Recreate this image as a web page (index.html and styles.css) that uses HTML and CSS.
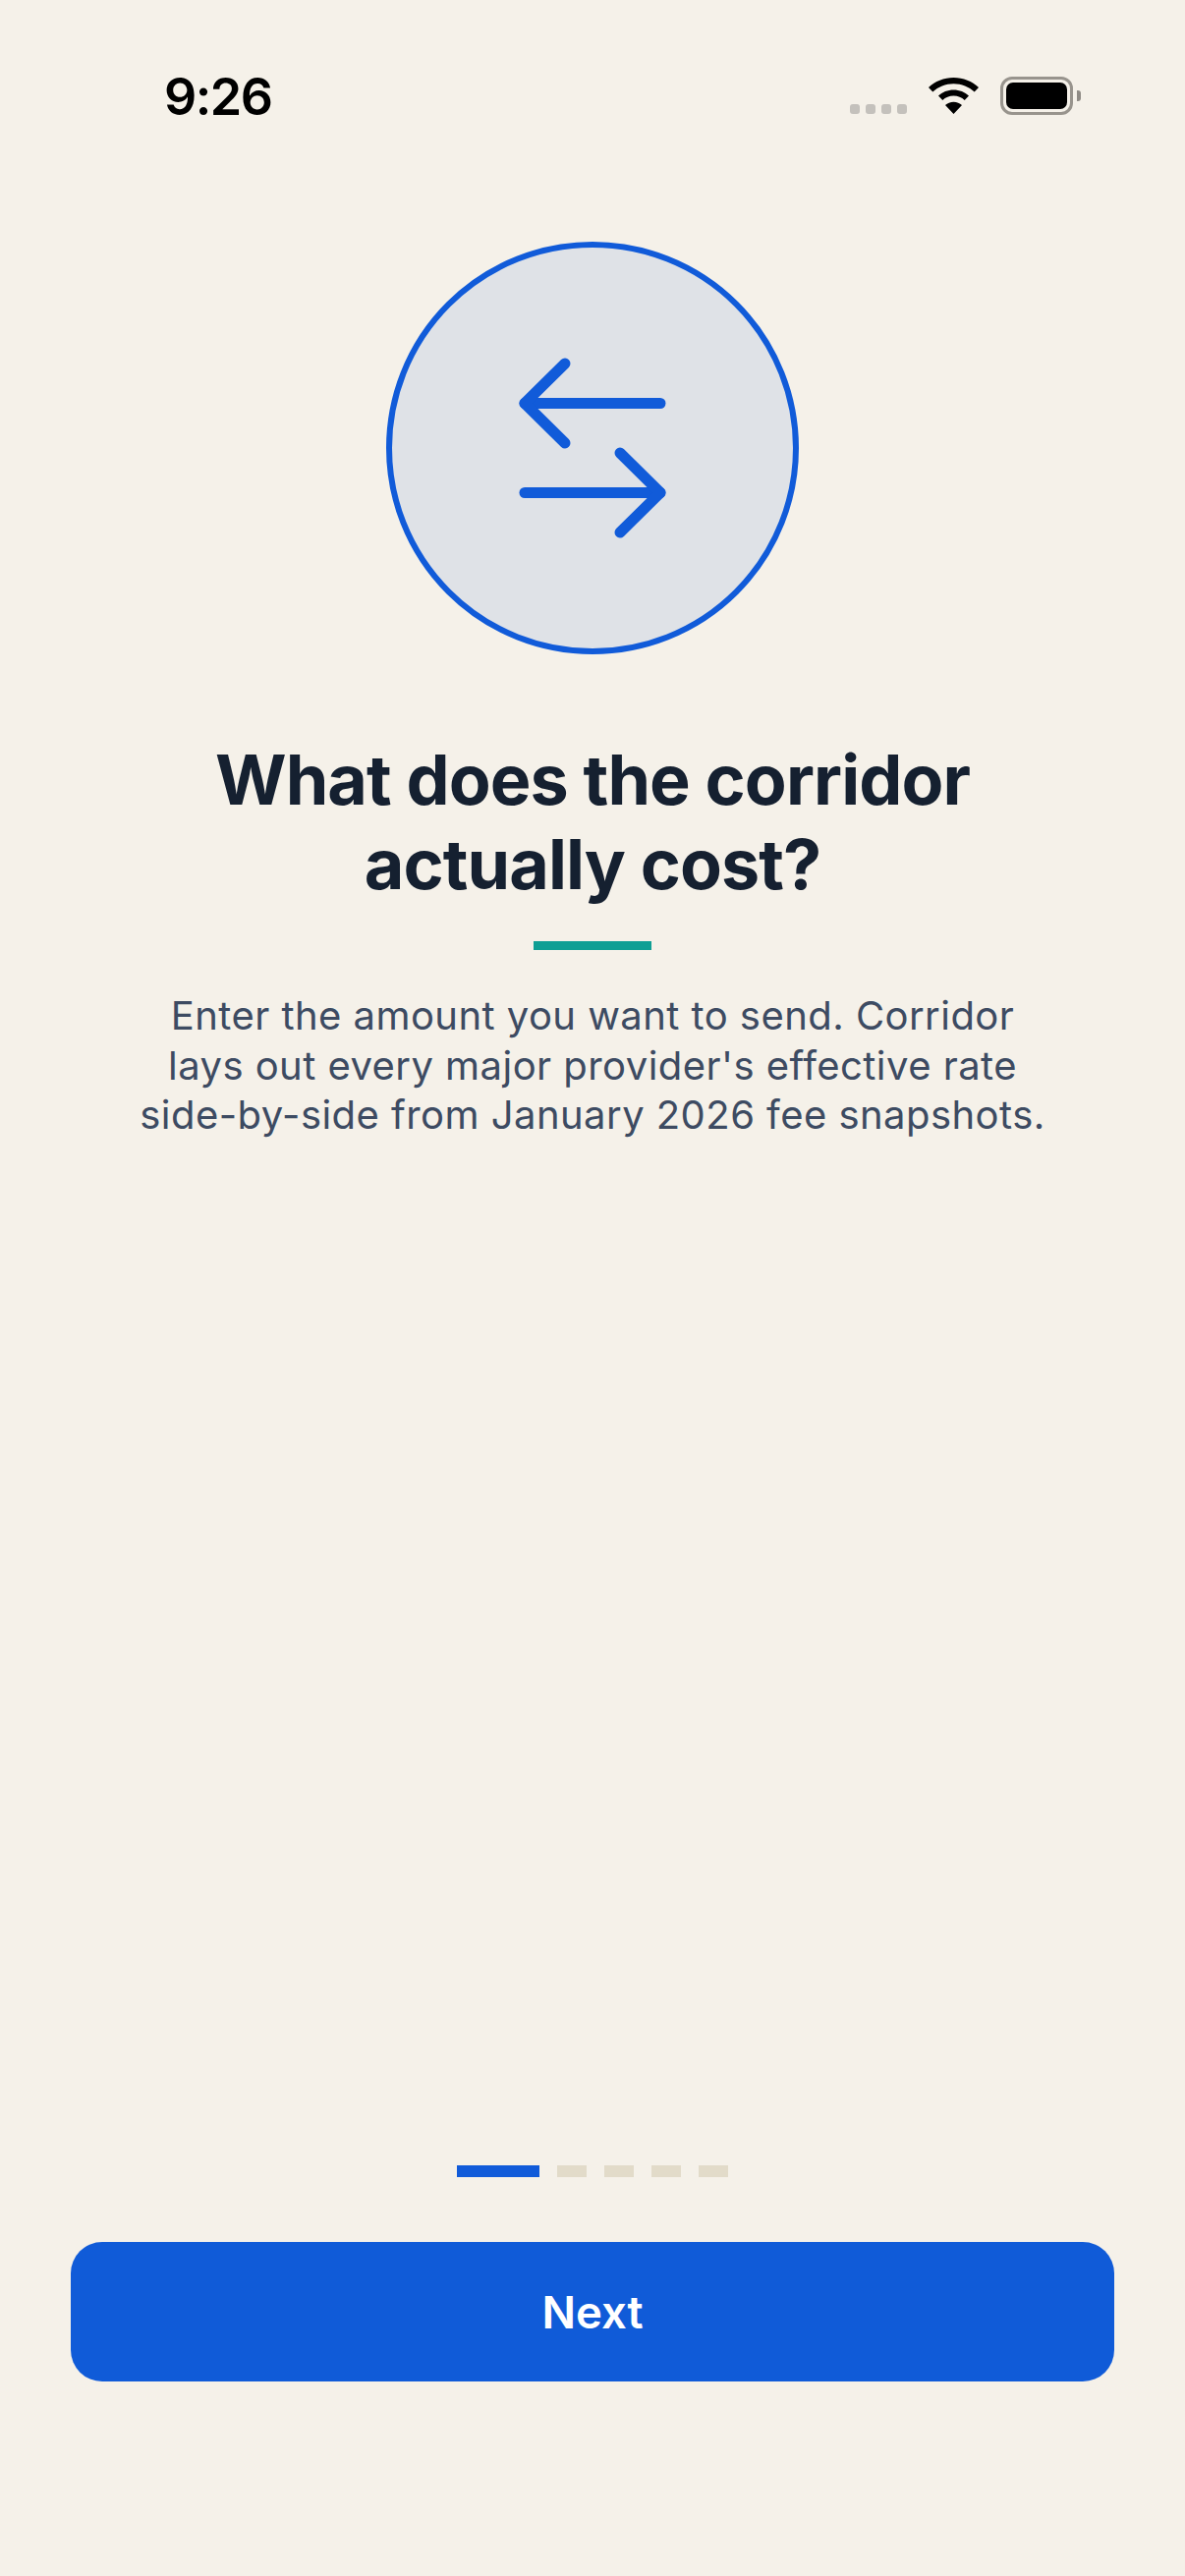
FILE: index.html
```html
<!DOCTYPE html>
<html lang="en">
<head>
  <meta charset="UTF-8">
  <meta name="viewport" content="width=device-width, initial-scale=1.0">
  <title>Corridor onboarding</title>
  <link rel="stylesheet" href="styles.css">
</head>
<body>
  <div class="screen">
    <div class="status-bar">
      <span class="clock">9:26</span>
      <div class="status-icons">
        <div class="signal"><i></i><i></i><i></i><i></i></div>
        <svg class="wifi" width="51" height="37" viewBox="0 0 51 37">
          <path d="M25.500 0C15.600 0 6.700 3.800 0 10l4.300 4.500C9.900 9.400 17.300 6.200 25.500 6.200s15.600 3.200 21.200 8.300L51 10C44.300 3.800 35.400 0 25.500 0z" fill="#000"/>
          <path d="M25.500 12.400c-6 0-11.400 2.300-15.500 6l4.300 4.500c2.900-2.700 6.900-4.300 11.200-4.300s8.300 1.600 11.200 4.300l4.300-4.500c-4.100-3.700-9.500-6-15.500-6z" fill="#000"/>
          <path d="M25.500 24.800c-3.300 0-6.300 1.300-8.500 3.300L25.500 37 34 28.100c-2.200-2-5.200-3.300-8.500-3.300z" fill="#000"/>
        </svg>
        <div class="battery"><div class="battery-fill"></div></div>
        <div class="battery-cap"></div>
      </div>
    </div>

    <div class="content">
      <div class="hero">
        <svg class="hero-icon" width="152" height="186" viewBox="0 0 152 186" fill="none" stroke="#115bd9" stroke-width="11" stroke-linecap="round" stroke-linejoin="round">
          <path d="M145 47.500H7"/>
          <path d="M48 7 7 47.500 48 88"/>
          <path d="M7 138.500H145"/>
          <path d="M104 98 145 138.500 104 179"/>
        </svg>
      </div>
      <h1>What does the corridor<br>actually cost?</h1>
      <div class="rule"></div>
      <p class="lead">Enter the amount you want to send. Corridor<br>lays out every major provider's effective rate<br>side-by-side from January 2026 fee snapshots.</p>
    </div>

    <div class="footer">
      <div class="pager">
        <span class="dash active"></span>
        <span class="dash"></span>
        <span class="dash"></span>
        <span class="dash"></span>
        <span class="dash"></span>
      </div>
      <button class="next-btn">Next</button>
    </div>
  </div>
</body>
</html>
```

FILE: styles.css
```css
* {
  box-sizing: border-box;
}
body {
  margin: 0;
  background: #f5f1e9;
  font-family: Inter, 'Liberation Sans', sans-serif;
}
.screen {
  width: 1206px;
  height: 2622px;
  display: flex;
  flex-direction: column;
}
.status-bar {
  height: 246px;
  padding: 67px 106px 0 167px;
  display: flex;
  justify-content: space-between;
  align-items: flex-start;
}
.clock {
  font-size: 52px;
  font-weight: 600;
  letter-spacing: -1.500px;
  color: #000;
}
.status-icons {
  display: flex;
  align-items: center;
  margin-top: 11px;
}
.signal {
  display: flex;
  gap: 6px;
  margin-right: 22px;
  align-self: flex-end;
  margin-bottom: 1px;
}
.signal i {
  width: 10px;
  height: 10px;
  border-radius: 3px;
  background: #c4c1bc;
}
.wifi {
  margin-right: 22px;
}
.battery {
  width: 74px;
  height: 39px;
  border: 3px solid #98948d;
  border-radius: 12px;
  padding: 3px;
}
.battery-fill {
  width: 100%;
  height: 100%;
  background: #000;
  border-radius: 7px;
}
.battery-cap {
  width: 4px;
  height: 11px;
  margin-left: 4px;
  background: #8f8b85;
  border-radius: 0 3px 3px 0;
}
.content {
  display: flex;
  flex-direction: column;
  align-items: center;
}
.hero {
  width: 420px;
  height: 420px;
  border-radius: 50%;
  border: 6px solid #115bd9;
  background: #dfe2e7;
  display: flex;
  align-items: center;
  justify-content: center;
}
h1 {
  margin: 85px 0 0;
  font-size: 70px;
  line-height: 86px;
  font-weight: 700;
  letter-spacing: -0.900px;
  text-align: center;
  color: #152030;
}
.rule {
  width: 120px;
  height: 9px;
  margin-top: 35px;
  background: #0f9f94;
}
.lead {
  margin: 42px 0 0;
  font-size: 40px;
  line-height: 50.500px;
  letter-spacing: 0.450px;
  text-align: center;
  color: #3d4b62;
}
.footer {
  margin-top: auto;
  padding: 0 72px 198px;
  display: flex;
  flex-direction: column;
  align-items: center;
  gap: 66px;
}
.pager {
  display: flex;
  gap: 18px;
}
.dash {
  width: 30px;
  height: 12px;
  background: #e2dbc9;
}
.dash.active {
  width: 84px;
  background: #115bd9;
}
.next-btn {
  width: 100%;
  height: 142px;
  border: none;
  border-radius: 32px;
  background: #105bd8;
  color: #fff;
  font-family: inherit;
  font-size: 45.500px;
  font-weight: 600;
}
```
